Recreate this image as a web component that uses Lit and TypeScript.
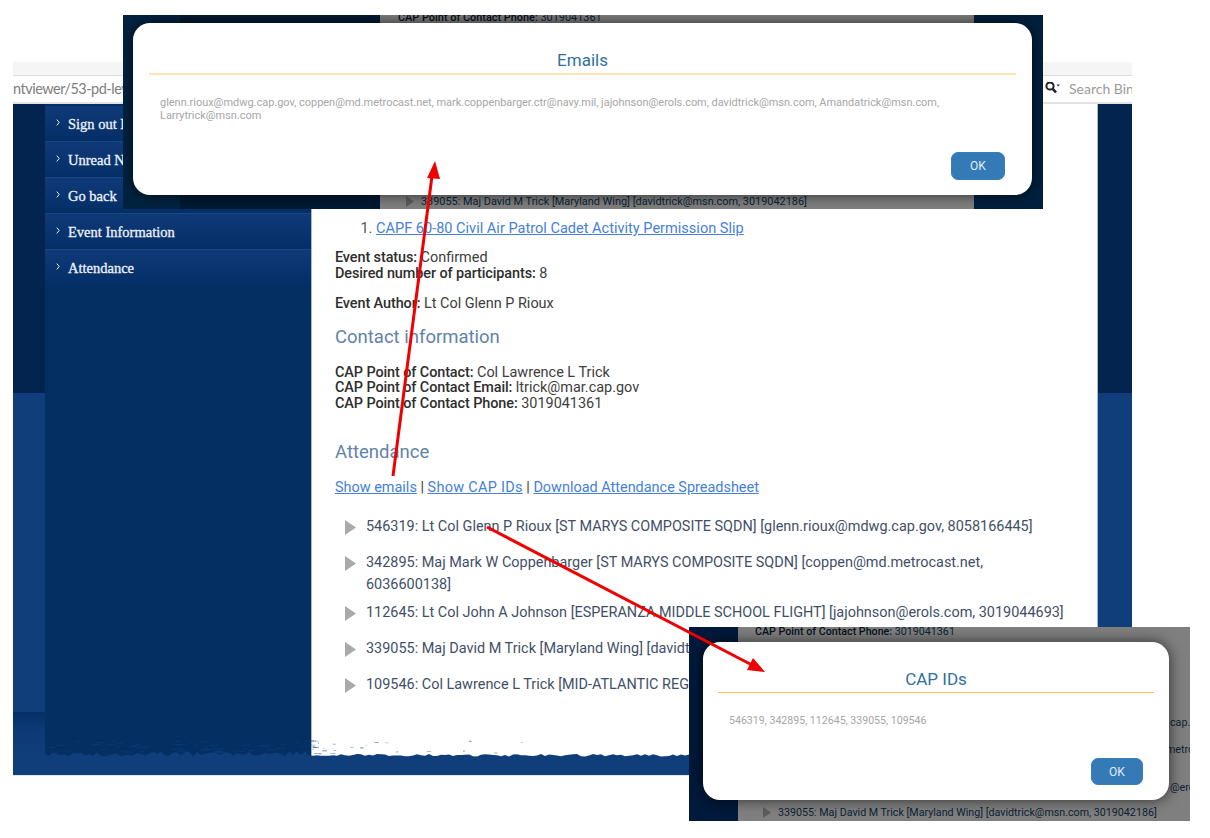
import { LitElement, html, css, svg } from "lit";
import { customElement, property } from "lit/decorators.js";

const MENU = [
  "Sign out Lt Col Glenn P Rioux",
  "Unread Notifications",
  "Go back",
  "Event Information",
  "Attendance",
];

const ATTENDEES = [
  "546319: Lt Col Glenn P Rioux [ST MARYS COMPOSITE SQDN] [glenn.rioux@mdwg.cap.gov, 8058166445]",
  "342895: Maj Mark W Coppenbarger [ST MARYS COMPOSITE SQDN] [coppen@md.metrocast.net, 6036600138]",
  "112645: Lt Col John A Johnson [ESPERANZA MIDDLE SCHOOL FLIGHT] [jajohnson@erols.com, 3019044693]",
  "339055: Maj David M Trick [Maryland Wing] [davidtrick@msn.com, 3019042186]",
  "109546: Col Lawrence L Trick [MID-ATLANTIC REGION] [ltrick@mar.cap.gov, 3019041361]",
];

const triangle = html`<svg class="tri" viewBox="0 0 11 15" aria-hidden="true">
  <polygon points="0,0 11,7.5 0,15" fill="currentColor"></polygon>
</svg>`;

// small repeatable noise, the torn paper edge at the foot of the page
function noise(seed: number) {
  const x = Math.sin(seed * 12.9898) * 43758.5453;
  return x - Math.floor(x);
}

function tornEdge() {
  const W = 1053;
  const H = 34;
  const pts: string[] = [`0,${H}`];
  for (let x = 0; x <= W; x += 4) {
    const depth = x < 266 ? noise(x + 3) * 5 : noise(x + 3) * 2.5;
    pts.push(`${x},${H - 0.5 - depth}`);
  }
  pts.push(`${W},${H}`);
  const flecks = [];
  for (let i = 0; i < 26; i++) {
    const x = 266 + Math.pow(noise(i + 40), 2) * 240;
    const y = 17 + noise(i + 90) * 14;
    flecks.push(
      svg`<rect x=${x} y=${y} width=${1 + noise(i + 7) * 4} height="1" fill="#0f3d7a" opacity=${0.15 + noise(i + 11) * 0.5}></rect>`
    );
  }
  const shade = [];
  for (let i = 0; i < 70; i++) {
    const x = noise(i + 200) * 266;
    const y = 16 + noise(i + 300) * 16;
    shade.push(
      svg`<rect x=${x} y=${y} width=${3 + noise(i + 17) * 10} height="1" fill="#184a88" opacity="0.35"></rect>`
    );
  }
  return html`<svg class="torn" viewBox="0 0 ${W} ${H}" aria-hidden="true">
    ${svg`<polygon points=${pts.join(" ")} fill="#103e7b"></polygon>`}
    ${flecks}${shade}
  </svg>`;
}

@customElement("dialog-box")
export class DialogBox extends LitElement {
  @property() heading = "";
  @property() body = "";

  static styles = css`
    :host {
      display: flex;
      flex-direction: column;
      box-sizing: border-box;
      background: #fff;
      border-radius: 17px;
      box-shadow: 0 0 14px rgba(0, 0, 0, 0.65);
      padding: 27px 16px 15px;
      font-family: Roboto, "Liberation Sans", sans-serif;
    }
    h2 {
      margin: 0;
      font-size: 17px;
      line-height: 20px;
      font-weight: 400;
      text-align: center;
      color: #31709f;
      padding: 0 0 3px;
      border-bottom: var(--rule, 2px solid #fce4b5);
    }
    p {
      flex: 1;
      margin: 0;
      padding: 21px 11px 0;
      font-size: var(--body-size, 10.95px);
      line-height: 13px;
      color: #a6a6a6;
    }
    .foot {
      display: flex;
      justify-content: flex-end;
      padding-right: 11px;
    }
    button {
      width: var(--ok-w, 54px);
      height: var(--ok-h, 28px);
      border: 1px solid #3a7db8;
      border-radius: 7px;
      background: #337ab7;
      color: #e3edf5;
      font: 400 12px Roboto, "Liberation Sans", sans-serif;
      padding: 0;
    }
  `;

  render() {
    return html`
      <h2>${this.heading}</h2>
      <p>${this.body}</p>
      <div class="foot"><button>OK</button></div>
    `;
  }
}

@customElement("app-root")
export class AppRoot extends LitElement {
  static styles = css`
    :host {
      display: block;
      position: relative;
      width: 1210px;
      height: 838px;
      overflow: hidden;
      background: #fff;
      font-family: Roboto, "Liberation Sans", sans-serif;
    }

    /* the browser capture underneath */
    .browser {
      position: absolute;
      left: 13px;
      top: 62px;
      width: 1119px;
    }
    .tabs {
      height: 13px;
      background: #f5f5f5;
      border-bottom: 1px solid #dcdcdc;
    }
    .address {
      display: flex;
      justify-content: space-between;
      align-items: center;
      height: 26px;
      border-bottom: 2px solid #e2e2e2;
      font: 400 14.5px Lato, sans-serif;
      color: #7d7d7d;
      overflow: hidden;
      white-space: nowrap;
    }
    .address > span:first-child {
      margin-top: -2px;
      letter-spacing: -0.5px;
    }
    .search {
      display: flex;
      align-items: center;
      gap: 9px;
      width: 87px;
      overflow: hidden;
      color: #9a9a9a;
      font-size: 14px;
    }
    .search span {
      margin-top: -2px;
    }
    .search svg {
      width: 15px;
      height: 14px;
      flex: none;
      margin-top: -3px;
    }
    .page {
      display: grid;
      grid-template-columns: 32px 266px 787px 34px;
      height: 653px;
      position: relative;
    }
    .edge {
      display: flex;
      flex-direction: column;
    }
    .edge i:nth-child(1) {
      height: 289px;
      background: #02244f;
    }
    .edge i:nth-child(2) {
      height: 319px;
      background: #103e7b;
    }
    .edge i:nth-child(3) {
      flex: 1;
      background: linear-gradient(#052e66, #0d3a76 40%, #103e7b);
    }
    .band {
      height: 18px;
      background: #103e7b;
      border-bottom: 1px solid #dfe8f2;
    }

    .menu {
      background: #032f63;
      padding-top: 2px;
    }
    .menu div {
      display: flex;
      align-items: center;
      height: 35px;
      padding-left: 11px;
      gap: 8px;
      border-bottom: 1px solid #1a4682;
      background: linear-gradient(#0f3a78, #042e66);
      color: #eef2f8;
      font: 400 14.5px "Liberation Serif", serif;
      -webkit-text-stroke: 0.3px #eef2f8;
      white-space: nowrap;
    }
    .menu div:last-child {
      border-bottom: none;
    }
    .menu span {
      padding-top: 2px;
    }
    .menu svg {
      width: 4px;
      height: 7px;
      flex: none;
      margin-top: -3px;
    }

    .content {
      background: #fff;
      border-left: 1px solid #a9b9cd;
      border-right: 1px solid #a9b9cd;
      padding: 115px 0 0 23px;
      font-size: 14.45px;
      line-height: 15.5px;
      color: #3d3d3d;
      overflow: hidden;
    }
    .content b {
      color: #2e2e2e;
      font-weight: 500;
      letter-spacing: -0.1px;
    }
    .content p {
      margin: 0;
    }
    ol {
      margin: 0 0 12px;
      padding-left: 41px;
      font-size: 14.55px;
      line-height: 19px;
      color: #555;
    }
    a {
      color: #4480dc;
      text-decoration: underline;
    }
    .links a.cap {
      letter-spacing: 0.3px;
    }
    h3 {
      margin: 0;
      font-size: 18.5px;
      line-height: 24px;
      font-weight: 400;
      color: #6183aa;
    }
    .content .author {
      margin-top: 15px;
    }
    .contact {
      margin-top: 13px;
    }
    .content .poc {
      margin-top: 16px;
    }
    .att {
      margin-top: 29px;
    }
    .content .links {
      margin-top: 14px;
      line-height: 19px;
    }
    ul {
      list-style: none;
      margin: 16px 0 0 10px;
      padding: 0;
      color: #3f4f68;
      line-height: 22px;
      width: 722px;
    }
    ul li {
      display: flex;
      gap: 10px;
      box-sizing: border-box;
      min-height: 36px;
      padding: 3px 0;
    }
    .tri {
      width: 11px;
      height: 15px;
      flex: none;
      margin-top: 4px;
      color: #aaa;
    }
    .torn {
      position: absolute;
      left: 32px;
      bottom: 0;
      width: 1053px;
      height: 34px;
    }

    /* pasted dialog captures */
    .shot {
      position: absolute;
      display: flex;
      overflow: hidden;
      line-height: 15px;
    }
    .shot dialog-box {
      position: absolute;
    }
    .dim {
      background: #7f7f7f;
      color: #0c1f33;
      display: flex;
      flex-direction: column;
      white-space: nowrap;
      overflow: hidden;
    }
    .dim b {
      font-weight: 500;
      color: #050f1a;
    }
    .dim .tri {
      width: 8px;
      height: 11px;
      margin: 0;
      color: #5c5c5c;
    }
    .row {
      display: flex;
      align-items: center;
      gap: 7px;
    }

    .emails {
      left: 123px;
      top: 15px;
      width: 920px;
      height: 194px;
      background: #00203e;
      font-size: 10.9px;
    }
    .emails .a {
      width: 57px;
      background: #022340;
    }
    .emails .b {
      width: 200px;
      background: #011a33;
    }
    .emails .dim {
      width: 594px;
      justify-content: space-between;
      padding: 0 0 0 18px;
      box-sizing: border-box;
    }
    .emails .row {
      padding: 0 0 0 8px;
      margin-top: auto;
      height: 15px;
    }
    .emails .top {
      margin-top: -5px;
    }
    .emails dialog-box {
      left: 10px;
      top: 8px;
      width: 899px;
      height: 172px;
    }

    .capids {
      left: 689px;
      top: 627px;
      width: 501px;
      height: 194px;
      background: #01193a;
      font-size: 10.7px;
    }
    .capids .a {
      width: 49px;
    }
    .capids .dim {
      width: 452px;
      padding-left: 17px;
      box-sizing: border-box;
    }
    .capids .top {
      margin-top: -3px;
    }
    .frag {
      padding-left: 415px;
      height: 15px;
    }
    .frag.one {
      margin-top: 76px;
    }
    .frag.two {
      margin-top: 12px;
      padding-left: 411px;
    }
    .frag.three {
      margin-top: 23px;
    }
    .capids .row {
      padding-left: 8px;
      margin-top: 10px;
    }
    .capids dialog-box {
      left: 14px;
      top: 15px;
      width: 466px;
      height: 158px;
      padding: 27px 15px 15px;
      --rule: 1px solid #fdc44f;
      --body-size: 10.6px;
      --ok-w: 52px;
      --ok-h: 27px;
    }

    .arrows {
      position: absolute;
      left: 0;
      top: 0;
      width: 1210px;
      height: 838px;
      pointer-events: none;
    }
  `;

  render() {
    const chevron = html`<svg viewBox="0 0 4 7" aria-hidden="true">
      <path d="M0.8 0.6 L3.2 3.5 L0.8 6.4" fill="none" stroke="#e8edf5" stroke-width="1"></path>
    </svg>`;
    return html`
      <div class="browser">
        <div class="tabs"></div>
        <div class="address">
          <span>ntviewer/53-pd-level-ii-squadron-leadership</span>
          <span class="search">
            <svg viewBox="0 0 15 14" aria-hidden="true">
              <circle cx="5" cy="5" r="3.6" fill="none" stroke="#222" stroke-width="2"></circle>
              <path d="M7.8 7.8 L11 11.5" stroke="#222" stroke-width="2.6"></path>
              <path d="M11.5 3.5 H15 L13.2 5.6 Z" fill="#333"></path>
            </svg>
            <span>Search Bing</span>
          </span>
        </div>
        <div class="page">
          <div class="edge"><i></i><i></i><i></i></div>
          <nav class="menu">
            ${MENU.map((m) => html`<div>${chevron}<span>${m}</span></div>`)}
          </nav>
          <main class="content">
            <ol>
              <li><a href="#">CAPF 60-80 Civil Air Patrol Cadet Activity Permission Slip</a></li>
            </ol>
            <p><b>Event status:</b> Confirmed</p>
            <p><b>Desired number of participants:</b> 8</p>
            <p class="author"><b>Event Author:</b> Lt Col Glenn P Rioux</p>
            <h3 class="contact">Contact information</h3>
            <p class="poc"><b>CAP Point of Contact:</b> Col Lawrence L Trick</p>
            <p><b>CAP Point of Contact Email:</b> ltrick@mar.cap.gov</p>
            <p><b>CAP Point of Contact Phone:</b> 3019041361</p>
            <h3 class="att">Attendance</h3>
            <p class="links">
              <a href="#">Show emails</a> | <a class="cap" href="#">Show CAP IDs</a> |
              <a href="#">Download Attendance Spreadsheet</a>
            </p>
            <ul>
              ${ATTENDEES.map((a) => html`<li>${triangle}<span>${a}</span></li>`)}
            </ul>
          </main>
          <div class="edge"><i></i><i></i><i></i></div>
          ${tornEdge()}
        </div>
        <div class="band"></div>
      </div>

      <section class="shot emails">
        <div class="a"></div>
        <div class="b"></div>
        <div class="dim">
          <div class="top"><b>CAP Point of Contact Phone:</b> 3019041361</div>
          <div class="row">
            ${triangle}<span>339055: Maj David M Trick [Maryland Wing] [davidtrick@msn.com, 3019042186]</span>
          </div>
        </div>
        <dialog-box
          heading="Emails"
          body="glenn.rioux@mdwg.cap.gov, coppen@md.metrocast.net, mark.coppenbarger.ctr@navy.mil, jajohnson@erols.com, davidtrick@msn.com, Amandatrick@msn.com, Larrytrick@msn.com"
        ></dialog-box>
      </section>

      <section class="shot capids">
        <div class="a"></div>
        <div class="dim">
          <div class="top"><b>CAP Point of Contact Phone:</b> 3019041361</div>
          <div class="frag one">cap.gov</div>
          <div class="frag two">metrocast</div>
          <div class="frag three">@erols</div>
          <div class="row">
            ${triangle}<span>339055: Maj David M Trick [Maryland Wing] [davidtrick@msn.com, 3019042186]</span>
          </div>
        </div>
        <dialog-box
          heading="CAP IDs"
          body="546319, 342895, 112645, 339055, 109546"
        ></dialog-box>
      </section>

      <svg class="arrows" viewBox="0 0 1210 838" aria-hidden="true">
        <line x1="393" y1="476" x2="432" y2="176" stroke="#f00000" stroke-width="3"></line>
        <polygon points="435,161 427,178 440,179" fill="#f00000"></polygon>
        <line x1="487" y1="527" x2="752" y2="665" stroke="#f00000" stroke-width="3"></line>
        <polygon points="765,672 753,658 747,670" fill="#f00000"></polygon>
      </svg>
    `;
  }
}
